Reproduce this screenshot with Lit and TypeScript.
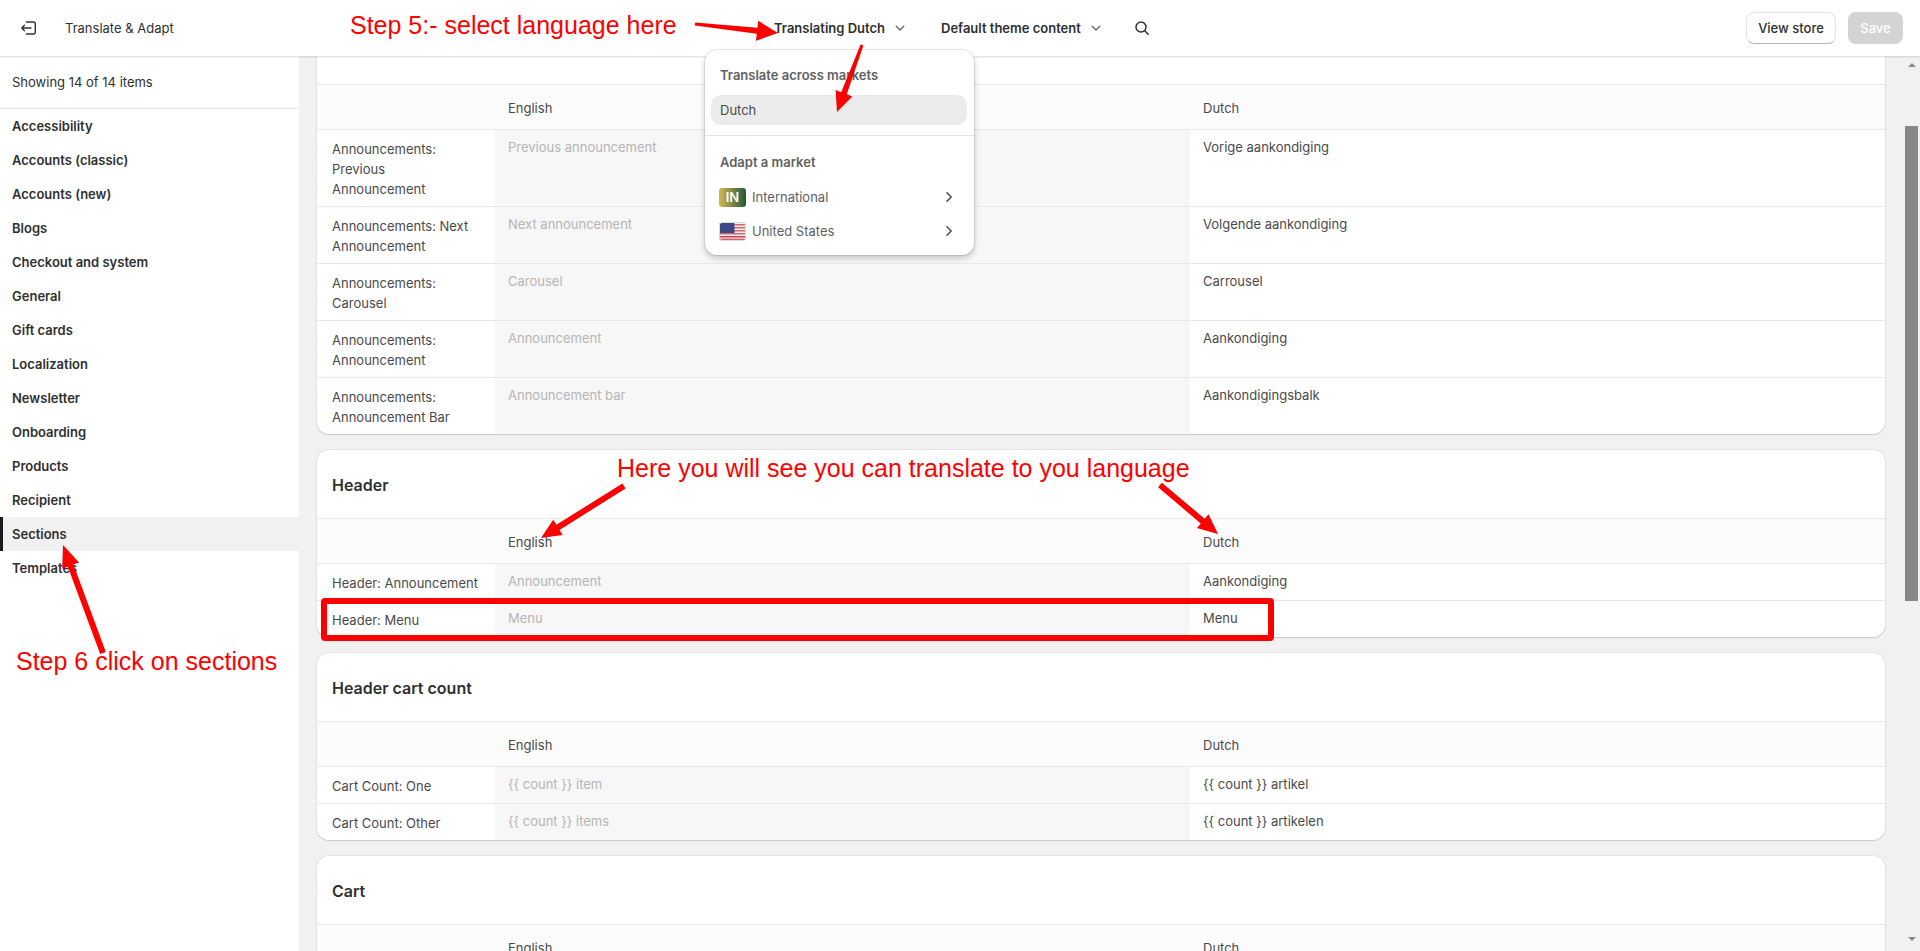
import { LitElement, html, css, svg } from "lit";
import { customElement } from "lit/decorators.js";

type Row = [string, string, string];
type Sec = { title: string; rows: Row[]; clip?: boolean };

const SECTIONS: Sec[] = [
  {
    title: "",
    clip: true,
    rows: [
      ["Announcements: Previous Announcement", "Previous announcement", "Vorige aankondiging"],
      ["Announcements: Next Announcement", "Next announcement", "Volgende aankondiging"],
      ["Announcements: Carousel", "Carousel", "Carrousel"],
      ["Announcements: Announcement", "Announcement", "Aankondiging"],
      ["Announcements: Announcement Bar", "Announcement bar", "Aankondigingsbalk"],
    ],
  },
  {
    title: "Header",
    rows: [
      ["Header: Announcement", "Announcement", "Aankondiging"],
      ["Header: Menu", "Menu", "Menu"],
    ],
  },
  {
    title: "Header cart count",
    rows: [
      ["Cart Count: One", "{{ count }} item", "{{ count }} artikel"],
      ["Cart Count: Other", "{{ count }} items", "{{ count }} artikelen"],
    ],
  },
  { title: "Cart", rows: [] },
];

const NAV = [
  "Accessibility", "Accounts (classic)", "Accounts (new)", "Blogs", "Checkout and system",
  "General", "Gift cards", "Localization", "Newsletter", "Onboarding", "Products",
  "Recipient", "Sections", "Templates",
];

// [startX, startY, tipX, tipY, startWidth, endWidth, headLength, headWidth]
const ARROWS: number[][] = [
  [695, 24, 778, 33, 3, 6, 21, 20],
  [862, 45, 837, 112, 3, 6, 20, 18],
  [103, 653, 63, 545, 6, 6, 22, 18],
  [624, 486, 541, 538, 6, 6, 20, 18],
  [1160, 485, 1218, 534, 6, 6, 20, 18],
];

function arrowPoints(a: number[]): string {
  const [x1, y1, x2, y2, w1, w2, hl, hw] = a;
  const len = Math.hypot(x2 - x1, y2 - y1);
  const ux = (x2 - x1) / len, uy = (y2 - y1) / len;
  const nx = -uy, ny = ux;
  const bx = x2 - ux * hl, by = y2 - uy * hl;
  const pts = [
    [x1 + (nx * w1) / 2, y1 + (ny * w1) / 2],
    [bx + (nx * w2) / 2, by + (ny * w2) / 2],
    [bx + (nx * hw) / 2, by + (ny * hw) / 2],
    [x2, y2],
    [bx - (nx * hw) / 2, by - (ny * hw) / 2],
    [bx - (nx * w2) / 2, by - (ny * w2) / 2],
    [x1 - (nx * w1) / 2, y1 - (ny * w1) / 2],
  ];
  return pts.map((p) => p.map((v) => v.toFixed(1)).join(",")).join(" ");
}

const chevDown = html`<svg class="chev" width="12" height="12" viewBox="0 0 12 12" fill="none"><path d="M2.2 4.2 6 8l3.8-3.8" stroke="#616161" stroke-width="1.3" stroke-linecap="round" stroke-linejoin="round"/></svg>`;
const chevRight = html`<svg class="chevr" width="12" height="12" viewBox="0 0 12 12" fill="none"><path d="M4 1.8 8.2 6 4 10.2" stroke="#4a4a4a" stroke-width="1.5" stroke-linecap="round" stroke-linejoin="round"/></svg>`;

const usFlag = html`<svg class="flag" width="27" height="19" viewBox="0 0 27 19">
  <defs><clipPath id="fc"><rect width="27" height="19" rx="3"/></clipPath></defs>
  <g clip-path="url(#fc)">
    <rect width="27" height="19" fill="#f3f3f3"/>
    <rect y="2" width="27" height="1.5" fill="#d5646c"/>
    <rect y="5" width="27" height="1.5" fill="#d5646c"/>
    <rect y="8" width="27" height="1.5" fill="#d5646c"/>
    <rect y="11" width="27" height="1.5" fill="#d5646c"/>
    <rect y="14" width="27" height="1.5" fill="#c8434c"/>
    <rect y="16.6" width="27" height="1.2" fill="#c8434c"/>
    <rect x="0.5" y="1" width="15" height="10" fill="#3a4a86"/>
  </g>
  <rect x=".5" y=".5" width="26" height="18" rx="2.5" fill="none" stroke="#dcdcdc"/>
</svg>`;

@customElement("app-root")
export class AppRoot extends LitElement {
  static styles = css`
    :host {
      display: block;
      position: relative;
      width: 1920px;
      height: 951px;
      overflow: hidden;
      background: #f1f1f1;
      font-family: Inter, "Liberation Sans", sans-serif;
      font-size: 13px;
      line-height: 20px;
      color: #303030;
    }
    * { box-sizing: border-box; }
    .top {
      height: 56px;
      background: #fff;
      display: flex;
      align-items: center;
      box-shadow: 0 1px 2px rgba(0, 0, 0, 0.14);
      position: relative;
      z-index: 2;
    }
    .back { margin-left: 20px; width: 18px; height: 18px; flex: none; }
    .app { margin-left: 27px; width: 709px; color: #303030; }
    .pick { display: flex; align-items: center; font-weight: 600; }
    .pick .chev { margin-left: 9px; }
    .p1 { width: 167px; }
    .p2 { width: 193px; }
    .search { width: 16px; height: 16px; flex: none; }
    .btns { margin-left: auto; margin-right: 17px; display: flex; gap: 12px; }
    .btn {
      height: 32px;
      border-radius: 8px;
      display: flex;
      align-items: center;
      justify-content: center;
      font-weight: 550;
    }
    .view {
      width: 90px;
      background: #fff;
      border: 1px solid #e3e3e3;
      border-bottom-color: #b5b5b5;
    }
    .save { width: 55px; background: #d4d4d4; color: #fff; }

    .body {
      display: grid;
      grid-template-columns: 299px 1fr 17px;
      height: 895px;
    }
    .side { background: #fff; }
    .count {
      height: 53px;
      padding: 16px 12px 0;
      border-bottom: 1px solid #e3e3e3;
    }
    .nav { display: flex; flex-direction: column; }
    .nav div {
      height: 34px;
      padding-left: 12px;
      display: flex;
      align-items: center;
      font-weight: 600;
    }
    .nav .on {
      background: #f1f1f1;
      border-left: 3px solid #1a1a1a;
      padding-left: 9px;
    }

    .main {
      padding: 0 18px;
      overflow: hidden;
      display: flex;
      flex-direction: column;
      gap: 16px;
    }
    .card {
      flex: none;
      background: #fff;
      border-radius: 12px;
      box-shadow: 0 0 0 1px rgba(0, 0, 0, 0.05), 0 1px 1px rgba(0, 0, 0, 0.12);
      overflow: hidden;
    }
    .card.clip { border-radius: 0 0 12px 12px; }
    .title {
      height: 68px;
      padding-left: 15px;
      padding-top: 1px;
      display: flex;
      align-items: center;
      font-size: 16px;
      font-weight: 600;
    }
    .clip .title { height: 28px; }
    .row {
      display: grid;
      grid-template-columns: 178px 695px 695px;
      border-top: 1px solid #e9e9e9;
    }
    .row > div { padding: 7px 13px 8px; }
    .row > .lab { padding: 9px 14px 7px 15px; color: #4a4a4a; }
    .row > .src { background: #f7f7f7; color: #b5b5b5; }
    .row > .dst { color: #4a4a4a; }
    .lang { background: #fcfcfc; height: 45px; align-items: center; }
    .lang > div { padding: 1px 13px 0; color: #4a4a4a; }

    .bar { background: #f1f1f1; position: relative; display: flex; flex-direction: column; align-items: center; }
    .up, .dn { width: 0; height: 0; border-left: 4px solid transparent; border-right: 4px solid transparent; flex: none; }
    .up { border-bottom: 4px solid #888; margin-top: 7px; }
    .dn { border-top: 4px solid #888; margin-top: 336px; }
    .thumb { width: 13px; height: 475px; background: #888; margin-top: 59px; }

    .menu {
      position: absolute;
      left: 705px;
      top: 50px;
      width: 269px;
      height: 205px;
      background: #fff;
      border-radius: 12px;
      box-shadow: 0 0 0 1px rgba(0, 0, 0, 0.08), 0 3px 6px rgba(0, 0, 0, 0.22);
      z-index: 3;
      color: #616161;
    }
    .mh { padding: 15px 15px 0; height: 45px; font-weight: 600; }
    .sel {
      margin: 0 7px 0 6px;
      height: 30px;
      border-radius: 10px;
      background: #ebebeb;
      padding-left: 9px;
      display: flex;
      align-items: center;
      color: #4a4a4a;
    }
    .hr { border-top: 1px solid #e3e3e3; margin-top: 10px; }
    .mh2 { padding: 16px 15px 0; height: 44px; font-weight: 600; }
    .mi {
      height: 34px;
      padding: 0 19px 0 14px;
      display: flex;
      align-items: center;
      gap: 6px;
    }
    .mi .chevr { margin-left: auto; }
    .flag { flex: none; display: block; }
    .in {
      width: 27px;
      height: 19px;
      border-radius: 3px;
      flex: none;
      background: linear-gradient(90deg, #d8b650, #1e5a3f);
      color: #fff;
      font-weight: 600;
      font-size: 13px;
      display: flex;
      align-items: center;
      justify-content: center;
    }

    .ink { position: absolute; left: 0; top: 0; width: 1920px; height: 951px; z-index: 4; pointer-events: none; }
    .note {
      position: absolute;
      z-index: 4;
      color: #f00;
      font-family: "Liberation Sans", Arial, sans-serif;
      font-size: 25px;
      line-height: 28px;
      white-space: nowrap;
    }
    .n1 { left: 350px; top: 11px; }
    .n2 { left: 617px; top: 454px; }
    .n3 { left: 16px; top: 647px; }
  `;

  private card(s: Sec) {
    return html`<section class="card ${s.clip ? "clip" : ""}">
      <div class="title">${s.title}</div>
      <div class="row lang"><div></div><div>English</div><div>Dutch</div></div>
      ${s.rows.map(
        (r) => html`<div class="row">
          <div class="lab">${r[0]}</div>
          <div class="src">${r[1]}</div>
          <div class="dst">${r[2]}</div>
        </div>`
      )}
      ${s.rows.length === 0
        ? html`<div class="row"><div class="lab">&nbsp;</div><div class="src"></div><div class="dst"></div></div>`
        : ""}
    </section>`;
  }

  render() {
    return html`
      <header class="top">
        <svg class="back" viewBox="0 0 18 18" fill="none" stroke="#303030" stroke-width="1.4" stroke-linecap="round" stroke-linejoin="round">
          <path d="M6.5 3h7A1.8 1.8 0 0 1 15.300 4.800v8.400A1.800 1.800 0 0 1 13.500 15h-7"/>
          <path d="M11 9H1.800M4.500 6.300 1.800 9l2.700 2.700"/>
        </svg>
        <div class="app">Translate &amp; Adapt</div>
        <div class="pick p1">Translating Dutch${chevDown}</div>
        <div class="pick p2">Default theme content${chevDown}</div>
        <svg class="search" viewBox="0 0 16 16" fill="none" stroke="#303030" stroke-width="1.5" stroke-linecap="round">
          <circle cx="7" cy="7" r="5"/><path d="m10.800 10.800 3.400 3.400"/>
        </svg>
        <div class="btns">
          <div class="btn view">View store</div>
          <div class="btn save">Save</div>
        </div>
      </header>
      <div class="body">
        <aside class="side">
          <div class="count">Showing 14 of 14 items</div>
          <nav class="nav">
            ${NAV.map((n) => html`<div class=${n === "Sections" ? "on" : ""}>${n}</div>`)}
          </nav>
        </aside>
        <main class="main">${SECTIONS.map((s) => this.card(s))}</main>
        <div class="bar"><i class="up"></i><i class="thumb"></i><i class="dn"></i></div>
      </div>

      <div class="menu">
        <div class="mh">Translate across markets</div>
        <div class="sel">Dutch</div>
        <div class="hr"></div>
        <div class="mh2">Adapt a market</div>
        <div class="mi"><span class="in">IN</span>International${chevRight}</div>
        <div class="mi">${usFlag}United States${chevRight}</div>
      </div>

      <div class="note n1">Step 5:- select language here</div>
      <div class="note n2">Here you will see you can translate to you language</div>
      <div class="note n3">Step 6 click on sections</div>
      <svg class="ink" viewBox="0 0 1920 951">
        ${ARROWS.map((a) => svg`<polygon points=${arrowPoints(a)} fill="#f00"/>`)}
        <rect x="324" y="601" width="947" height="37" rx="1" fill="none" stroke="#f00" stroke-width="6"/>
      </svg>
    `;
  }
}
